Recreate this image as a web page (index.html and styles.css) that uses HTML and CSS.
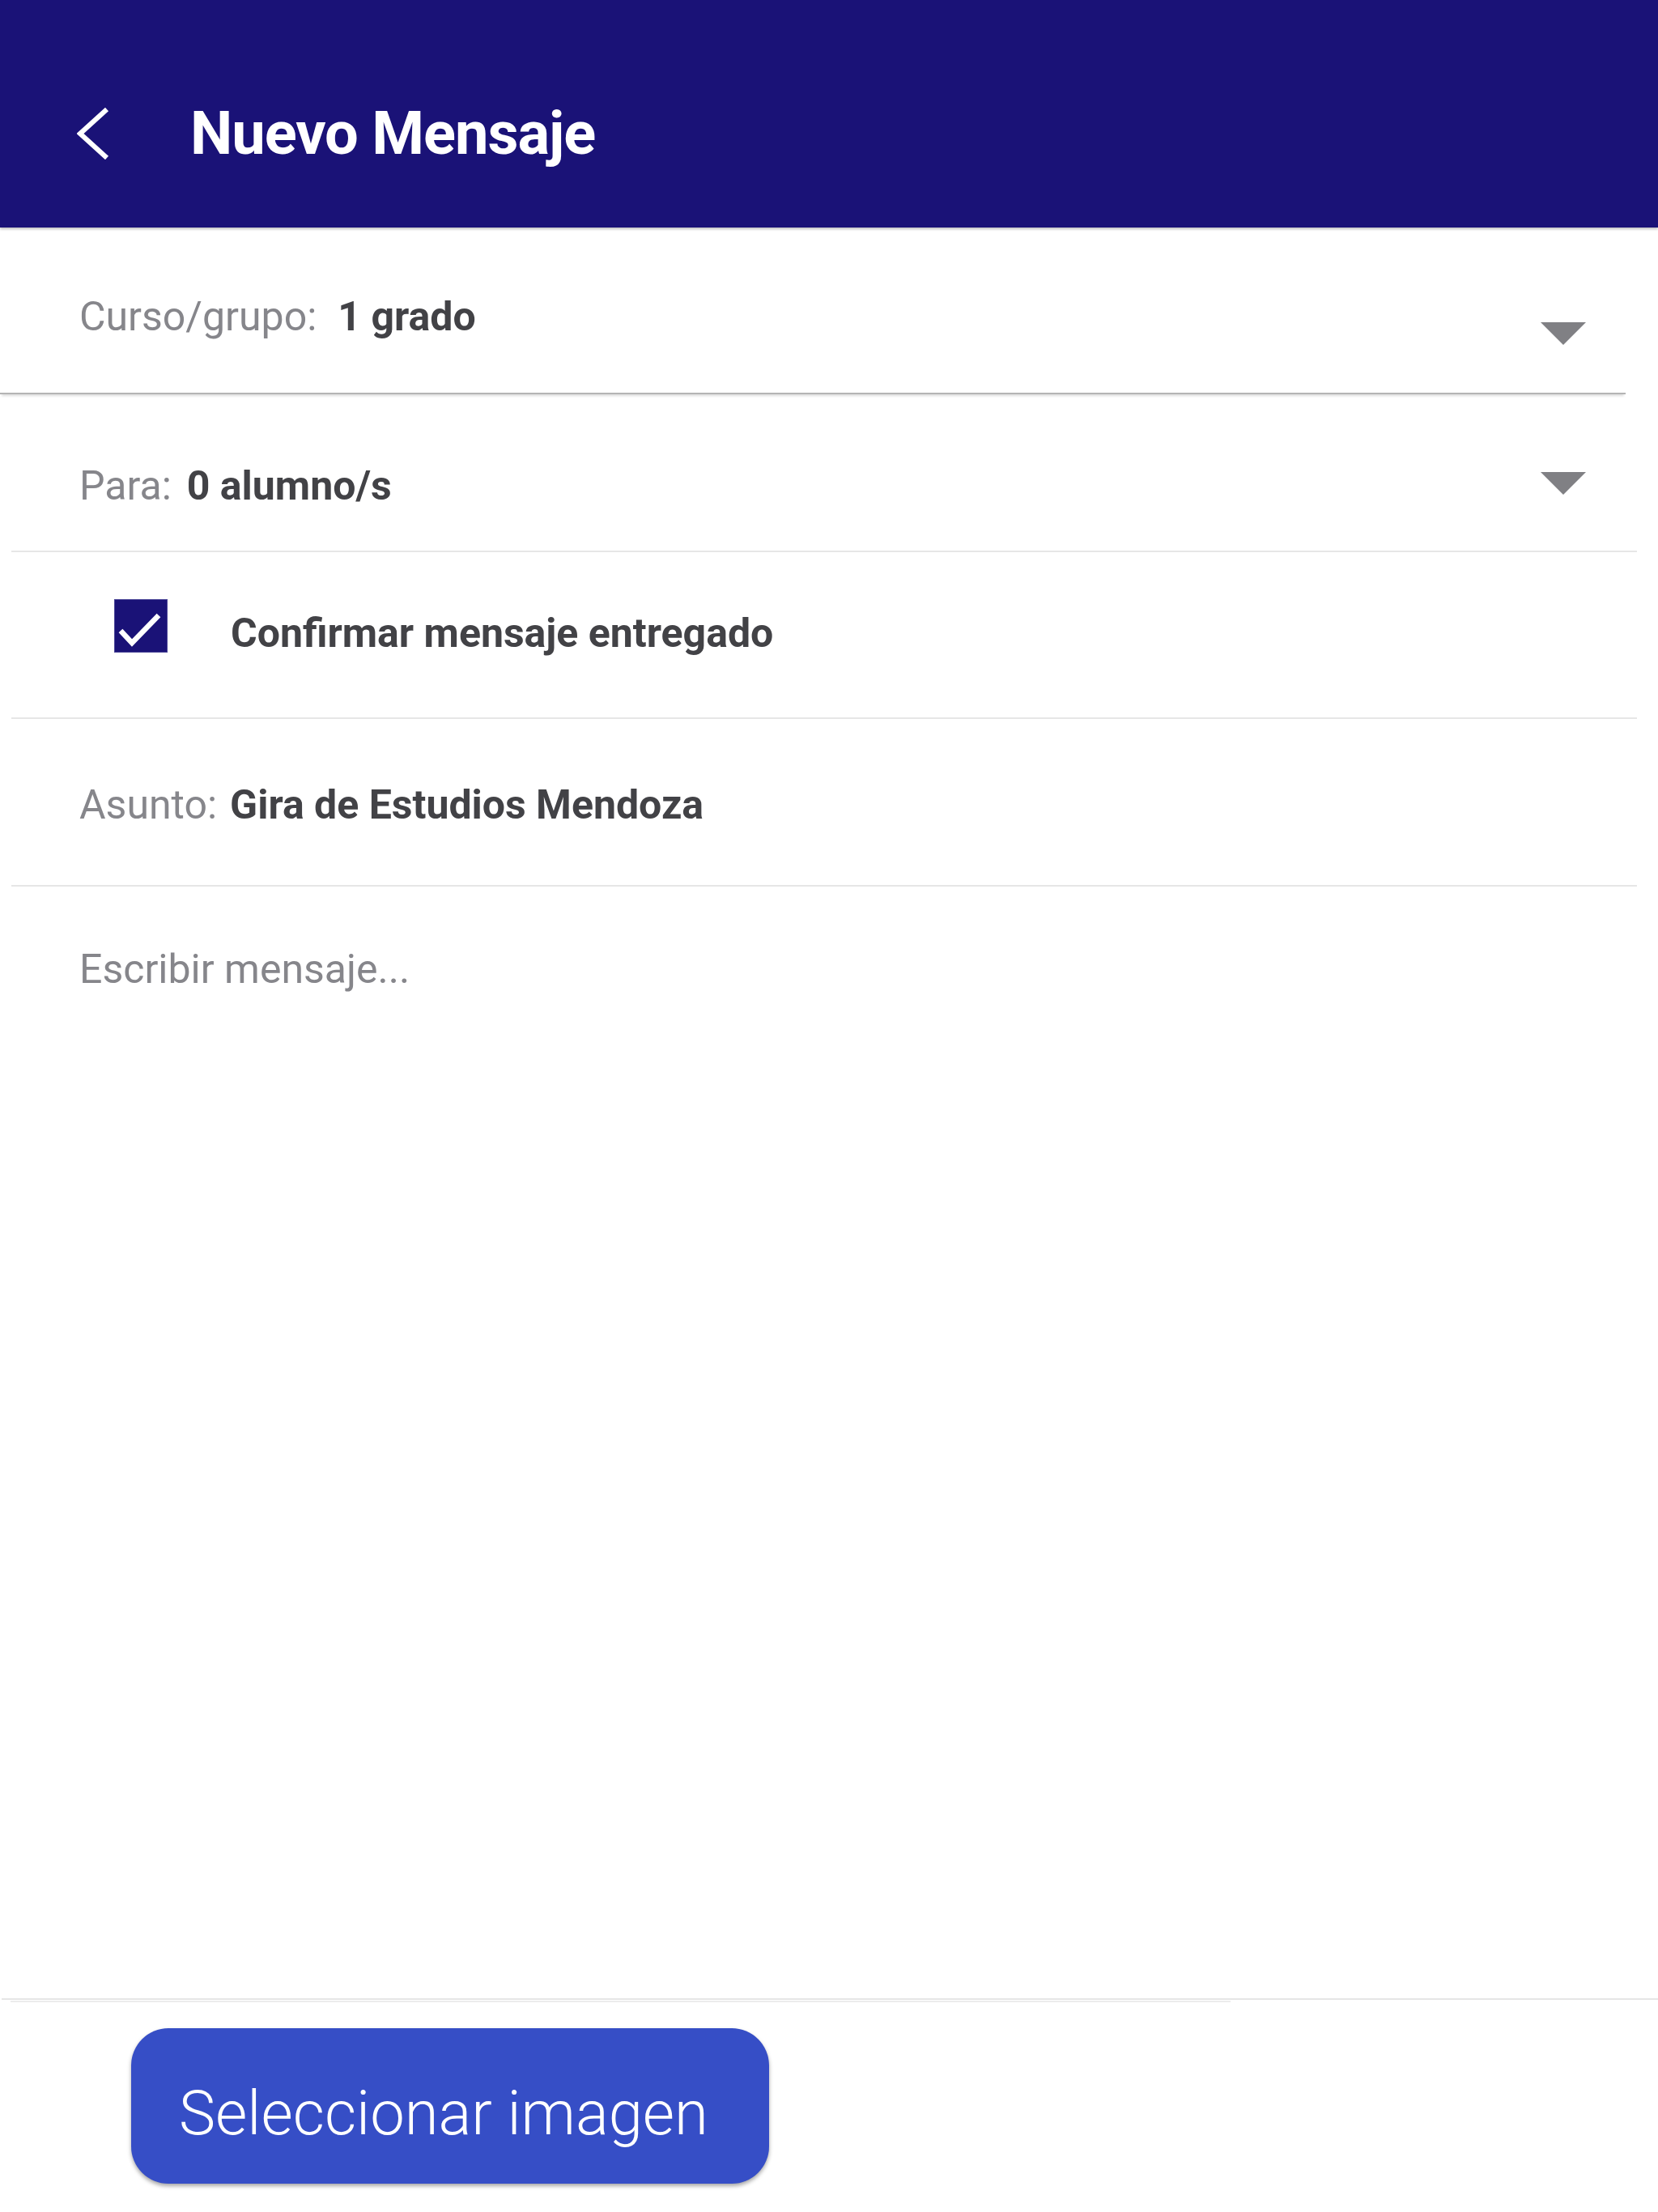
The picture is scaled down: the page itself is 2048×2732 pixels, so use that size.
FILE: index.html
```html
<!DOCTYPE html>
<html lang="es">
<head>
<meta charset="utf-8">
<title>Nuevo Mensaje</title>
<link rel="stylesheet" href="styles.css">
</head>
<body>
<div class="screen">
  <header class="topbar">
    <svg class="back" width="40" height="64" viewBox="0 0 40 64" aria-hidden="true">
      <polyline points="37,2 4,32 37,62" fill="none" stroke="#ffffff" stroke-width="6"/>
    </svg>
    <h1 class="title">Nuevo Mensaje</h1>
  </header>

  <div class="card">
    <div class="line"><span class="label">Curso/grupo:</span><span class="value value-curso">1 grado</span></div>
    <span class="caret caret-curso"></span>
  </div>

  <div class="row row-para">
    <div class="line"><span class="label">Para:</span><span class="value value-para">0 alumno/s</span></div>
    <span class="caret caret-para"></span>
  </div>

  <div class="row row-check">
    <span class="checkbox">
      <svg width="66" height="66" viewBox="0 0 66 66" aria-hidden="true">
        <polyline points="8,39 22,54 55,20" fill="none" stroke="#ffffff" stroke-width="6.5"/>
      </svg>
    </span>
    <span class="check-label">Confirmar mensaje entregado</span>
  </div>

  <div class="row row-asunto">
    <div class="line"><span class="label">Asunto:</span><span class="value value-asunto">Gira de Estudios Mendoza</span></div>
  </div>

  <div class="message">
    <div class="placeholder">Escribir mensaje...</div>
  </div>

  <footer class="footer">
    <div class="rule rule-a"></div>
    <div class="rule rule-b"></div>
    <button class="pick" type="button">Seleccionar imagen</button>
  </footer>
</div>
</body>
</html>
```

FILE: styles.css
```css
* { box-sizing: border-box; }

html, body {
  margin: 0;
  padding: 0;
  background: #ffffff;
}

body {
  font-family: Roboto, "Noto Sans", "Liberation Sans", sans-serif;
  width: 2048px;
  height: 2732px;
  overflow: hidden;
}

.screen {
  display: flex;
  flex-direction: column;
  width: 2048px;
  height: 2732px;
}

.topbar {
  height: 281px;
  flex: 0 0 auto;
  background: #1a1277;
  display: flex;
  align-items: center;
  padding: 49px 0 0 95px;
  box-shadow: 0 2px 3px rgba(0, 0, 0, 0.25);
  position: relative;
  z-index: 2;
}

.back { display: block; flex: 0 0 auto; }

.title {
  margin: 0 0 0 100px;
  color: #ffffff;
  font-size: 74px;
  font-weight: 700;
  letter-spacing: -1px;
  line-height: 1.2;
}

.line {
  font-size: 50px;
  line-height: 60px;
  white-space: nowrap;
}

.label { color: #86868b; font-weight: 400; }
.value { color: #424246; font-weight: 700; }
.value-curso { margin-left: 26px; }
.value-para { margin-left: 19px; }
.value-asunto { margin-left: 16px; }

.caret {
  width: 0;
  height: 0;
  border-left: 28px solid transparent;
  border-right: 28px solid transparent;
  border-top: 28px solid #808084;
  margin-left: auto;
  flex: 0 0 auto;
}

.card {
  height: 206px;
  margin-right: 40px;
  display: flex;
  align-items: flex-start;
  padding: 80px 49px 0 98px;
  border-bottom: 2px solid #b4b4b4;
  box-shadow: 0 4px 3px -2px rgba(0, 0, 0, 0.14);
  background: #ffffff;
  position: relative;
  z-index: 1;
}
.caret-curso { margin-top: 37px; }

.row {
  margin: 0 26px 0 14px;
  display: flex;
  align-items: flex-start;
  border-bottom: 2px solid #e6e6e6;
}

.row-para {
  height: 195px;
  padding: 83px 63px 0 84px;
}
.caret-para { margin-top: 13px; }

.row-check {
  height: 206px;
  padding: 0 0 0 127px;
}

.checkbox {
  display: block;
  width: 66px;
  height: 66px;
  margin-top: 58px;
  background: #1a1277;
  border: 1.5px solid #4a4496;
  flex: 0 0 auto;
}
.checkbox svg { display: block; margin: -1.5px; }

.check-label {
  margin: 70px 0 0 78px;
  font-size: 50px;
  line-height: 60px;
  font-weight: 700;
  color: #424246;
  white-space: nowrap;
}

.row-asunto {
  height: 207px;
  padding: 76px 0 0 84px;
}

.message {
  flex: 1 1 auto;
  padding: 72px 0 0 98px;
}

.placeholder {
  font-size: 50px;
  line-height: 60px;
  color: #86868b;
}

.footer {
  flex: 0 0 264px;
  display: flex;
  flex-direction: column;
  align-items: flex-start;
}

.rule { height: 2px; background: #e6e6e6; }
.rule-a { width: 2046px; margin-left: 2px; }
.rule-b { width: 1507px; margin: 1px 0 0 13px; background: #ececec; }

.pick {
  margin: 32px 0 0 162px;
  width: 788px;
  height: 192px;
  border: none;
  border-radius: 46px;
  background: #364ec6;
  box-shadow: 0 3px 5px rgba(0, 0, 0, 0.35);
  color: #ffffff;
  font-family: Roboto, "Noto Sans", "Liberation Sans", sans-serif;
  font-size: 76px;
  font-weight: 300;
  line-height: 1.2;
  text-align: left;
  padding: 20px 0 0 59px;
  white-space: nowrap;
}
```
